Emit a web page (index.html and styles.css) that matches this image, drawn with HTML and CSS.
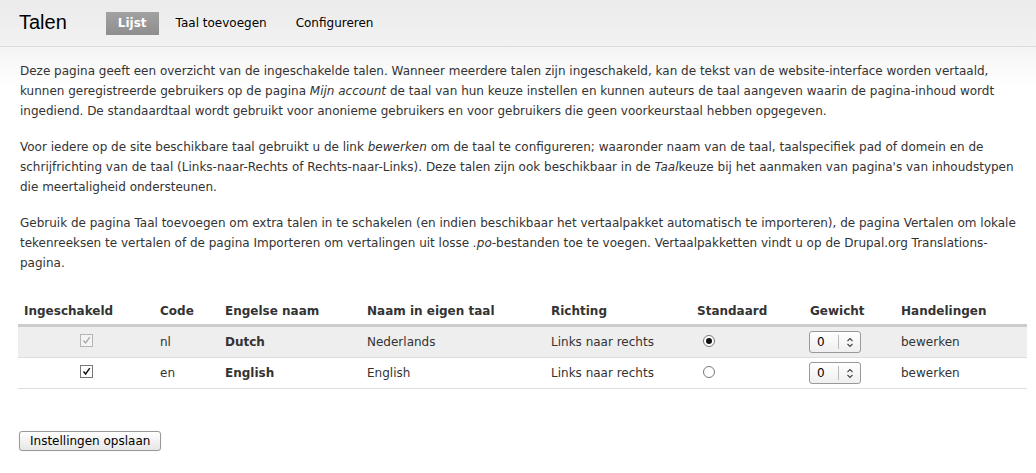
FILE: index.html
```html
<!DOCTYPE html>
<html lang="nl">
<head>
<meta charset="utf-8">
<title>Talen</title>
<link rel="stylesheet" href="styles.css">
</head>
<body>
<div class="header">
  <h1 class="title">Talen</h1>
  <ul class="tabs">
    <li class="tab active">Lijst</li>
    <li class="tab">Taal toevoegen</li>
    <li class="tab">Configureren</li>
  </ul>
</div>
<div class="content">
  <p>Deze pagina geeft een overzicht van de ingeschakelde talen. Wanneer meerdere talen zijn ingeschakeld, kan de tekst van de website-interface worden vertaald, kunnen geregistreerde gebruikers op de pagina <em>Mijn account</em> de taal van hun keuze instellen en kunnen auteurs de taal aangeven waarin de pagina-inhoud wordt ingediend. De standaardtaal wordt gebruikt voor anonieme gebruikers en voor gebruikers die geen voorkeurstaal hebben opgegeven.</p>
  <p>Voor iedere op de site beschikbare taal gebruikt u de link <em>bewerken</em> om de taal te configureren; waaronder naam van de taal, taalspecifiek pad of domein en de schrijfrichting van de taal (Links-naar-Rechts of Rechts-naar-Links). Deze talen zijn ook beschikbaar in de <em>Taal</em>keuze bij het aanmaken van pagina's van inhoudstypen die meertaligheid ondersteunen.</p>
  <p>Gebruik de pagina Taal toevoegen om extra talen in te schakelen (en indien beschikbaar het vertaalpakket automatisch te importeren), de pagina Vertalen om lokale tekenreeksen te vertalen of de pagina Importeren om vertalingen uit losse <em>.po</em>-bestanden toe te voegen. Vertaalpakketten vindt u op de Drupal.org Translations-pagina.</p>

  <table class="langs">
    <thead>
      <tr>
        <th class="c-enabled">Ingeschakeld</th>
        <th class="c-code">Code</th>
        <th class="c-en">Engelse naam</th>
        <th class="c-native">Naam in eigen taal</th>
        <th class="c-dir">Richting</th>
        <th class="c-def">Standaard</th>
        <th class="c-weight">Gewicht</th>
        <th class="c-ops">Handelingen</th>
      </tr>
    </thead>
    <tbody>
      <tr class="odd">
        <td class="center"><span class="check disabled"><svg width="9" height="9" viewBox="0 0 9 9"><path d="M1.5 4.5 L3.6 7 L7.8 1.2" fill="none" stroke="#a8a8a8" stroke-width="1.3"/></svg></span></td>
        <td>nl</td>
        <td><strong>Dutch</strong></td>
        <td>Nederlands</td>
        <td>Links naar rechts</td>
        <td><span class="radio checked"><span class="dot"></span></span></td>
        <td><span class="select"><span class="val">0</span><span class="arrows"><svg width="8" height="11" viewBox="0 0 8 11"><path d="M1.5 4 L4 1.5 L6.5 4 M1.5 7 L4 9.5 L6.5 7" fill="none" stroke="#444" stroke-width="1.1"/></svg></span></span></td>
        <td>bewerken</td>
      </tr>
      <tr class="even">
        <td class="center"><span class="check"><svg width="9" height="9" viewBox="0 0 9 9"><path d="M1.5 4.5 L3.6 7 L7.8 1.2" fill="none" stroke="#111" stroke-width="1.4"/></svg></span></td>
        <td>en</td>
        <td><strong>English</strong></td>
        <td>English</td>
        <td>Links naar rechts</td>
        <td><span class="radio"></span></td>
        <td><span class="select"><span class="val">0</span><span class="arrows"><svg width="8" height="11" viewBox="0 0 8 11"><path d="M1.5 4 L4 1.5 L6.5 4 M1.5 7 L4 9.5 L6.5 7" fill="none" stroke="#444" stroke-width="1.1"/></svg></span></span></td>
        <td>bewerken</td>
      </tr>
    </tbody>
  </table>

  <div class="actions">
    <button class="button" type="button">Instellingen opslaan</button>
  </div>
</div>
</body>
</html>
```

FILE: styles.css
```css
html, body {
  margin: 0;
  padding: 0;
  background: #fff;
}
body {
  font-family: "DejaVu Sans", sans-serif;
  font-size: 12px;
  line-height: 20px;
  color: #333;
}
.header {
  height: 46px;
  border-bottom: 1px solid #dcdcdc;
  background: linear-gradient(#ebebeb, #f2f2f2);
  display: flex;
  align-items: center;
  padding: 0 0 0 19px;
}
.title {
  margin: 0 39px 0 0;
  font-family: "Liberation Sans", Arial, sans-serif;
  font-weight: normal;
  font-size: 20px;
  line-height: 24px;
  color: #000;
  padding-bottom: 2px;
}
.tabs {
  list-style: none;
  display: flex;
  gap: 5px;
  margin: 0;
  padding: 0;
  align-items: center;
}
.tab {
  padding: 0 12px;
  height: 23px;
  line-height: 23px;
  color: #000;
  font-size: 12px;
}
.tab.active {
  background: linear-gradient(#a2a2a2, #8e8e8e);
  color: #fff;
  font-weight: bold;
}
.content {
  padding: 14px 20px 20px 20px;
  background: linear-gradient(#f4f4f4, #fff 40px);
}
.content p {
  margin: 0 0 16px 0;
}
.langs {
  margin-top: 25px;
  border-collapse: collapse;
  margin-left: -2px;
  width: calc(100% + 13px);
}
.langs th {
  text-align: left;
  font-weight: bold;
  padding: 3px 6px;
  border-bottom: 3px solid #ccc;
  white-space: nowrap;
}
.langs td {
  padding: 4px 6px;
  border-bottom: 1px solid #ddd;
  height: 22px;
}
.langs tr.odd td { background: #eee; }
.langs td.center { text-align: center; }
.c-enabled { width: 124px; }
.c-code { width: 53px; }
.c-en { width: 130px; }
.c-native { width: 172px; }
.c-dir { width: 134px; }
.c-def { width: 101px; }
.c-weight { width: 79px; }

.check {
  display: inline-block;
  width: 11px;
  height: 11px;
  border: 1px solid #777;
  background: #fff;
  vertical-align: middle;
  position: relative;
  top: -2px;
}
.check svg { display: block; margin: 1px; }
.check.disabled { border-color: #b5b5b5; background: #f4f4f4; }
.radio {
  display: inline-block;
  width: 10px;
  height: 10px;
  border: 1px solid #777;
  border-radius: 50%;
  background: #fff;
  margin-left: 6px;
  vertical-align: middle;
  position: relative;
  top: -2px;
}
.radio .dot {
  position: absolute;
  left: 2px;
  top: 2px;
  width: 6px;
  height: 6px;
  border-radius: 50%;
  background: #111;
}
.select {
  display: inline-flex;
  align-items: center;
  width: 50px;
  height: 20px;
  border: 1px solid #999;
  border-radius: 3px;
  background: linear-gradient(#fff, #efefef);
  vertical-align: middle;
  margin-left: -1px;
}
.select .val {
  width: 28px;
  padding-left: 7px;
  box-sizing: border-box;
  line-height: 20px;
  color: #000;
}
.select .arrows {
  flex: 1;
  height: 14px;
  border-left: 1px solid #bbb;
  display: flex;
  align-items: center;
  justify-content: center;
}
.select svg { display: block; }
.actions {
  margin-top: 42px;
}
.button {
  font-family: "DejaVu Sans", sans-serif;
  font-size: 12px;
  line-height: 16px;
  color: #000;
  background: linear-gradient(#fff, #e6e6e6);
  border: 1px solid #999;
  border-radius: 3px;
  padding: 1px 10px;
  height: 20px;
  margin-left: -1px;
  box-shadow: 0 0 1px #ccc;
  display: block;
}
```
